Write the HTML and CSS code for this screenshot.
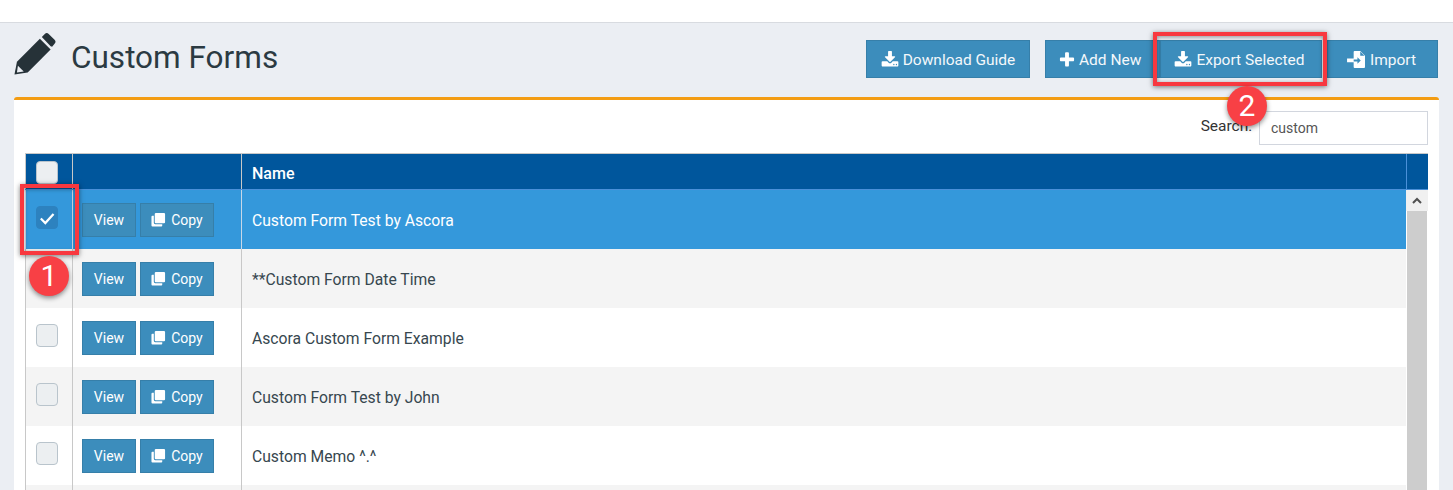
FILE: index.html
```html
<!DOCTYPE html>
<html lang="en">
<head>
<meta charset="utf-8">
<title>Custom Forms</title>
<link rel="stylesheet" href="styles.css">
</head>
<body>
<svg class="defs" width="0" height="0" aria-hidden="true">
  <symbol id="i-download" viewBox="0 0 1792 1792"><path d="M1344 1344q0-26-19-45t-45-19-45 19-19 45 19 45 45 19 45-19 19-45zm256 0q0-26-19-45t-45-19-45 19-19 45 19 45 45 19 45-19 19-45zm128-224v320q0 40-28 68t-68 28h-1472q-40 0-68-28t-28-68v-320q0-40 28-68t68-28h465l135 136q58 56 136 56t136-56l136-136h464q40 0 68 28t28 68zm-325-569q17 41-14 70l-448 448q-18 19-45 19t-45-19l-448-448q-31-29-14-70 17-39 59-39h256v-448q0-26 19-45t45-19h256q26 0 45 19t19 45v448h256q42 0 59 39z"/></symbol>
  <symbol id="i-plus" viewBox="0 0 1792 1792"><path d="M1600 736v192q0 40-28 68t-68 28h-416v416q0 40-28 68t-68 28h-192q-40 0-68-28t-28-68v-416h-416q-40 0-68-28t-28-68v-192q0-40 28-68t68-28h416v-416q0-40 28-68t68-28h192q40 0 68 28t28 68v416h416q40 0 68 28t28 68z"/></symbol>
  <symbol id="i-copy" viewBox="0 0 16 16"><path d="M1.500 4H3v7.500A1.500 1.500 0 0 0 4.500 13H12v1.500a1 1 0 0 1-1 1H1.500a1 1 0 0 1-1-1V5a1 1 0 0 1 1-1z"/><rect x="4" y="1" width="11" height="11" rx="1.200"/></symbol>
  <symbol id="i-import" viewBox="0 0 20 18"><path d="M8 0h6l5 5v12a1 1 0 0 1-1 1H8a1 1 0 0 1-1-1v-5H0V8h7V1a1 1 0 0 1 1-1z"/><path class="cut" d="M7 9h4V6.500l3.500 3.500L11 13.500V11H7z"/><path class="cut" d="M14 0.500V5h4.500z"/></symbol>
</svg>

<div class="topbar"></div>

<main class="page">
  <header class="page-head">
    <h1 class="title">
      <svg class="pencil" viewBox="0 0 44 44" aria-hidden="true">
        <path d="M0.500 43 L3 30 L26.500 6.500 L37.500 17.500 L14 41 Z"/>
        <path d="M28.500 4.500 L31.500 1.500 Q33.500 -0.300 35.500 1.500 L41.500 7.500 Q43.500 9.500 41.500 11.500 L39 14.500 L37.500 14 Z"/>
        <path class="pencil-tip" d="M4 34 L10 40 L3 41 Z"/>
      </svg>
      <span>Custom Forms</span>
    </h1>
    <div class="actions">
      <button class="btn btn-guide"><svg class="ico"><use href="#i-download"/></svg>Download Guide</button>
      <button class="btn btn-add"><svg class="ico"><use href="#i-plus"/></svg>Add New</button>
      <button class="btn btn-export"><svg class="ico"><use href="#i-download"/></svg>Export Selected</button>
      <button class="btn btn-import"><svg class="ico ico-import"><use href="#i-import"/></svg>Import</button>
    </div>
  </header>

  <section class="panel">
    <div class="search-row">
      <label class="search-label" for="q">Search:</label>
      <input id="q" class="search-input" value="custom">
    </div>

    <div class="table">
      <div class="thead">
        <div class="th th-check"><span class="check"></span></div>
        <div class="th th-actions"></div>
        <div class="th th-name">Name</div>
        <div class="th th-scroll"></div>
      </div>
      <div class="tbody">
        <div class="rows">
          <div class="row selected">
            <div class="cell cell-check"><span class="check checked"><svg viewBox="0 0 16 16"><path d="M2.500 8.500 L6.500 12.500 L13.800 4.500"/></svg></span></div>
            <div class="cell cell-actions"><button class="mini">View</button><button class="mini"><svg class="ico-copy"><use href="#i-copy"/></svg>Copy</button></div>
            <div class="cell cell-name">Custom Form Test by Ascora</div>
          </div>
          <div class="row alt">
            <div class="cell cell-check"><span class="check"></span></div>
            <div class="cell cell-actions"><button class="mini">View</button><button class="mini"><svg class="ico-copy"><use href="#i-copy"/></svg>Copy</button></div>
            <div class="cell cell-name">**Custom Form Date Time</div>
          </div>
          <div class="row">
            <div class="cell cell-check"><span class="check"></span></div>
            <div class="cell cell-actions"><button class="mini">View</button><button class="mini"><svg class="ico-copy"><use href="#i-copy"/></svg>Copy</button></div>
            <div class="cell cell-name">Ascora Custom Form Example</div>
          </div>
          <div class="row alt">
            <div class="cell cell-check"><span class="check"></span></div>
            <div class="cell cell-actions"><button class="mini">View</button><button class="mini"><svg class="ico-copy"><use href="#i-copy"/></svg>Copy</button></div>
            <div class="cell cell-name">Custom Form Test by John</div>
          </div>
          <div class="row">
            <div class="cell cell-check"><span class="check"></span></div>
            <div class="cell cell-actions"><button class="mini">View</button><button class="mini"><svg class="ico-copy"><use href="#i-copy"/></svg>Copy</button></div>
            <div class="cell cell-name">Custom Memo ^.^</div>
          </div>
          <div class="row alt">
            <div class="cell cell-check"></div>
            <div class="cell cell-actions"></div>
            <div class="cell cell-name"></div>
          </div>
        </div>
        <div class="scrollbar">
          <div class="scroll-up"><svg viewBox="0 0 10 6"><path d="M1 5.500 L5 1.500 L9 5.500"/></svg></div>
          <div class="scroll-thumb"></div>
        </div>
      </div>
    </div>
  </section>
</main>

<div class="mark mark-check"></div>
<div class="mark mark-export"></div>
<div class="badge badge-1">1</div>
<div class="badge badge-2">2</div>
</body>
</html>
```

FILE: styles.css
```css
* { box-sizing: border-box; }

html, body {
  margin: 0;
  height: 490px;
  overflow: hidden;
}

body {
  position: relative;
  background: #ebeef3;
  font-family: Roboto, "Liberation Sans", sans-serif;
  color: #2b3a42;
}

.defs { position: absolute; }

.topbar {
  height: 23px;
  background: #fff;
  border-bottom: 1px solid #d8dbe0;
}

.page { padding: 0 14px; }

.page-head {
  height: 74px;
  display: flex;
  justify-content: space-between;
  align-items: flex-start;
}

.title {
  margin: 13px 0 0;
  display: flex;
  align-items: center;
  gap: 14px;
  font-size: 31.500px;
  font-weight: 400;
  line-height: 44px;
  color: #2b3a42;
}

.pencil {
  width: 43px;
  height: 44px;
  margin-top: -8px;
  fill: #263238;
  display: block;
}

.pencil-tip { fill: #ebeef3; }

.actions {
  margin: 17px 1px 0 0;
  display: flex;
  align-items: flex-start;
}

.btn {
  height: 38px;
  padding: 1px 12px 0;
  display: flex;
  align-items: center;
  gap: 5px;
  background: #3c8dbc;
  border: 1px solid #367fa9;
  color: #f4f8fb;
  font-family: inherit;
  font-size: 15.500px;
  font-weight: 400;
  white-space: nowrap;
}

.btn-guide { width: 164px; justify-content: center; gap: 4px; margin-right: 15px; }
.btn-add { width: 115px; justify-content: flex-start; gap: 3px; }
.btn-export { width: 162px; justify-content: center; gap: 4px; padding-right: 15px; margin-right: 5px; }
.btn-import { width: 111px; justify-content: center; gap: 4px; padding-right: 14px; }

.ico { width: 18px; height: 18px; fill: #fff; flex: none; }
.ico-import { width: 19px; height: 17px; }
.cut { fill: #3c8dbc; }

.panel {
  height: 400px;
  background: #fff;
  border-top: 3px solid #f39c12;
  border-radius: 3px 3px 0 0;
  padding: 0 11px;
}

.search-row {
  height: 53px;
  padding-top: 11px;
  display: flex;
  justify-content: flex-end;
  align-items: flex-start;
  gap: 7px;
}

.search-label {
  font-size: 15.500px;
  line-height: 34px;
  height: 34px;
  margin-top: -2px;
  color: #333;
}

.search-input {
  width: 169px;
  height: 34px;
  padding: 0 11px;
  border: 1px solid #d2d6de;
  font-family: inherit;
  font-size: 14px;
  color: #555;
  outline: none;
}

.table { width: 1403px; }

.thead {
  height: 37px;
  display: flex;
  background: #00569c;
  border-top: 1px solid #c8c8c8;
  border-bottom: 1px solid #4a90d9;
  color: #fff;
}

.th { border-left: 1px solid #c8c8c8; display: flex; align-items: center; }
.th-check { width: 47px; justify-content: center; padding: 1px 4px 0 0; }
.th-actions { width: 169px; }
.th-name { flex: 1; padding-left: 10px; font-size: 16px; font-weight: 500; padding-top: 3px; }
.th-scroll { width: 22px; border-left: 1px solid #4a90d9; }

.tbody { display: flex; height: 300px; overflow: hidden; }
.rows { flex: 1; min-width: 0; }

.row { height: 59px; display: flex; background: #fff; }
.row.alt { background: #f4f4f4; }
.row.selected { background: #3498db; color: #fff; }

.cell { display: flex; align-items: center; border-left: 1px solid #c8c8c8; }
.selected .cell { border-left-color: #c8d8e8; }
.cell-check { width: 47px; justify-content: center; padding: 0 4px 4px 0; }
.cell-actions { width: 169px; padding: 0 0 0 9px; gap: 4px; }
.cell-name { flex: 1; padding: 2px 0 0 10px; font-size: 15.700px; color: #37474f; }
.selected .cell-name { color: #fff; }

.check {
  width: 22px;
  height: 23px;
  border-radius: 4px;
  border: 1px solid #b9c4cc;
  background: #eceff1;
  display: flex;
  align-items: center;
  justify-content: center;
}

.check.checked { background: #2d82bf; border-color: #2d82bf; }

.check svg {
  width: 18px;
  height: 18px;
  flex: none;
  fill: none;
  stroke: #fff;
  stroke-width: 2;
}

.mini {
  height: 34px;
  width: 54px;
  padding: 0;
  display: flex;
  align-items: center;
  justify-content: center;
  gap: 5px;
  background: #3c8dbc;
  border: 1px solid #367fa9;
  color: #fff;
  font-family: inherit;
  font-size: 14px;
}

.mini + .mini { width: 74px; }

.ico-copy { width: 15px; height: 15px; fill: #fff; }

.scrollbar { width: 22px; flex: none; background: #fff; padding: 0 1px; }
.scroll-up {
  height: 21px;
  background: #f0f0f0;
  display: flex;
  align-items: center;
  justify-content: center;
  margin: 0 -1px 0 -1px;
}
.scroll-up svg { width: 10px; height: 7px; fill: none; stroke: #505050; stroke-width: 2; }
.scroll-thumb { height: 280px; background: #cdcdcd; }

.mark {
  position: absolute;
  border: 4px solid #f8383f;
  box-shadow: 0 1px 5px rgba(0, 0, 0, 0.5), inset 0 1px 4px rgba(0, 0, 0, 0.4);
}
.mark-check { left: 20px; top: 184px; width: 59px; height: 71px; }
.mark-export { left: 1153px; top: 32px; width: 174px; height: 54px; }

.badge {
  position: absolute;
  width: 40px;
  height: 40px;
  border-radius: 50%;
  background: #f84045;
  color: #fff;
  font-size: 30px;
  line-height: 40px;
  text-align: center;
  box-shadow: 0 2px 5px rgba(0, 0, 0, 0.45);
}
.badge-1 { left: 29px; top: 256px; }
.badge-2 { left: 1227px; top: 86px; }
```
